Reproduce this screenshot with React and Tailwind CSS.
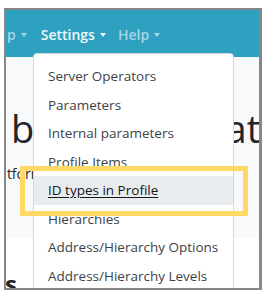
import React from 'react'

const items = [
  'Server Operators',
  'Parameters',
  'Internal parameters',
  'Profile Items',
  'ID types in Profile',
  'Hierarchies',
  'Address/Hierarchy Options',
  'Address/Hierarchy Levels',
]

const Caret = () => (
  <span className="ml-[5px] inline-block h-0 w-0 border-x-[3px] border-t-[4px] border-x-transparent border-t-current align-middle" />
)

const NavItem = ({ label, active, className = '' }) => (
  <span
    className={`flex items-center text-[14px] font-semibold ${active ? 'text-[#eef7fa]' : 'text-[#a6d6e5]'} ${className}`}
  >
    {label}
    <Caret />
  </span>
)

export default function App() {
  return (
    <div className="h-[296px] w-[271px] bg-white pl-[4px] pt-[8px] font-['Open_Sans',sans-serif]">
      <div className="relative h-[282px] w-[258px] overflow-hidden border-2 border-r-[3px] border-[#878787]">
        <header className="flex h-[47px] items-center bg-[#2ea1c0] pt-[2px]">
          <NavItem label="p" className="ml-[1px]" />
          <NavItem label="Settings" active className="ml-[14px]" />
          <NavItem label="Help" className="ml-[12px]" />
        </header>

        <main className="h-[181px] bg-[#f8f9fa]">
          <div className="flex whitespace-nowrap pt-[52px] text-[38px] font-medium leading-none text-[#212529]">
            <span className="ml-[5px]">ba</span>
            <span className="ml-auto mr-[-14px]">atf</span>
          </div>
          <p className="ml-[-19px] mt-[16px] whitespace-nowrap text-[14px] text-[#212529]">platform</p>
        </main>

        <section className="bg-white pt-[34px]">
          <h2 className="ml-[-1px] text-[24px] font-bold leading-none text-[#212529]">s</h2>
        </section>

        <div className="absolute left-[27px] top-[43px] h-[260px] w-[201px] rounded-t-[4px] border border-[#d5d8db] bg-white py-[8px]">
          {items.map((item, i) => (
            <div
              key={item}
              className={`flex h-[28.5px] items-center whitespace-nowrap px-[14px] text-[13.5px] ${
                i === 4 ? 'bg-[#e9ecef] text-[#16181b] underline underline-offset-2' : 'text-[#3d4246]'
              }`}
            >
              {item}
            </div>
          ))}
        </div>

        <div className="absolute left-[14px] top-[156px] h-[50px] w-[228px] border-[5px] border-[#ffd966]" />
      </div>
    </div>
  )
}
